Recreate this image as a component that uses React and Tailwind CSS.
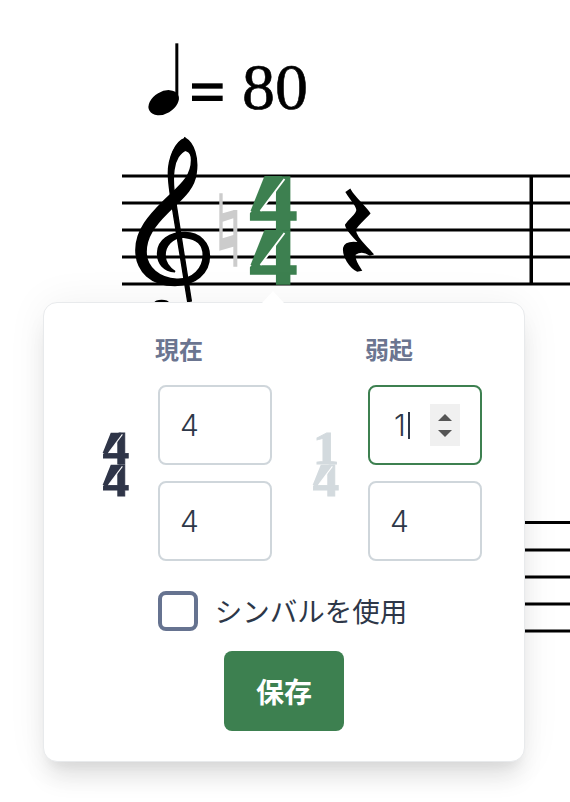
const serif = '"Liberation Serif", serif';
const ui = '"Noto Sans CJK JP", "Noto Sans", sans-serif';

function Score() {
  const staff1 = [176, 203, 230, 257, 284];
  const staff2 = [522.5, 550, 577, 604, 631];
  return (
    <svg className="absolute inset-0" width="570" height="802" viewBox="0 0 570 802">
      {staff1.map((y) => <rect key={y} x="122" y={y - 1.5} width="448" height="3" fill="#000" />)}
      {staff2.map((y) => <rect key={y} x="500" y={y - 1.5} width="70" height="3" fill="#000" />)}
      <rect x="529.5" y="175" width="3.5" height="110" fill="#000" />
      <g transform="translate(120 30) scale(0.3333)">
        {/* quarter note */}
        <rect x="166" y="40" width="9" height="170" fill="#000" />
        <ellipse cx="131" cy="218" rx="49" ry="33" transform="rotate(-30 131 218)" fill="#000" />
        <rect x="216" y="160" width="92" height="16" fill="#000" />
        <rect x="216" y="197" width="92" height="16" fill="#000" />
        {/* clef */}
        <path fill="#000" stroke="#000" strokeWidth="5" d="M195 325 C222 340 235 385 228 430 C222 480 180 510 140 550 C105 585 78 620 78 665 C78 715 120 745 170 748 C220 750 250 715 250 675 C250 640 225 625 195 622 C155 620 135 650 135 675 C135 700 150 715 165 725 C130 722 113 700 113 670 C113 630 150 608 195 608 C240 608 268 640 268 678 C268 730 225 766 165 766 C95 766 48 725 48 660 C48 600 90 555 130 515 C175 470 215 445 215 390 C215 375 210 365 200 362 Z" />
        <path fill="#000" stroke="#000" strokeWidth="4" d="M195 325 C165 335 145 385 145 430 C145 460 150 490 155 520 L203 815 L214 813 L168 520 C160 480 158 450 162 420 C165 390 180 365 200 360 Z" />
        <ellipse cx="125" cy="818" rx="22" ry="9" fill="#000" />
        {/* natural */}
        <path fill="#cccccc" d="M298 490 H308 V550 L340 541 V540 H352 V710 H340 V650 L298 662 Z M308 575 V625 L340 615 V565 Z" fillRule="evenodd" />
        {/* rest */}
        <path fill="#000" stroke="#000" strokeWidth="6" d="M680 487 L690 480 C700 500 730 525 748 550 C735 565 705 590 705 600 C705 625 740 650 757 672 L750 674 C730 660 715 665 705 672 C700 685 712 705 722 720 L712 722 C690 710 670 680 672 655 C675 640 690 635 720 640 C700 620 680 600 678 585 C690 565 712 555 712 540 C712 525 690 505 680 487 Z" />
      </g>
      <text x="242" y="109" fontFamily={serif} fontSize="66" fill="#000" stroke="#000" strokeWidth="0.6">80</text>
      <Four x={273.5} y={230} size={80} sx={1.2} fill="#3d8050" stroke={1.5} k={1} />
      <Four x={273.5} y={284} size={80} sx={1.2} fill="#3d8050" stroke={1.5} k={1} />
    </svg>
  );
}

function Digit({ x, y, size, sx, fill, stroke, value }) {
  return (
    <g transform={`translate(${x} ${y}) scale(${sx} 1)`}>
      <text textAnchor="middle" y="0" fontFamily={serif} fontWeight="700" fontSize={size} fill={fill} stroke={fill} strokeWidth={stroke}>{value}</text>
    </g>
  );
}

function Four({ x, y, size, sx, fill, stroke, k }) {
  const p = (dx, dy) => `${x + dx * k},${y + dy * k}`;
  return (
    <g>
      <Digit x={x} y={y} size={size} sx={sx} fill={fill} stroke={stroke} value="4" />
      <polygon fill={fill} points={[p(-9, -54), p(9, -54), p(-15, -19), p(-23, -19)].join(' ')} />
      <line x1={x + 11 * k} y1={y - 51 * k} x2={x - 13 * k} y2={y - 19 * k} stroke="#fff" strokeWidth={1.8 * k} />
    </g>
  );
}

function TimeSig({ top, bottom, color }) {
  return (
    <svg width="28" height="66" viewBox="0 0 28 66" className="block overflow-visible">
      {top === '4'
        ? <Four x={14} y={32} size={46} sx={1.15} fill={color} stroke={0.8} k={0.58} />
        : <Digit x={14} y={32} size={46} sx={1.15} fill={color} stroke={0.8} value={top} />}
      <Four x={14} y={64} size={46} sx={1.15} fill={color} stroke={0.8} k={0.58} />
    </svg>
  );
}

function NumInput({ value, focused }) {
  return (
    <div className="relative">
      <input
        readOnly
        type="text"
        value={value}
        className={`block h-[80px] w-[114px] rounded-lg border-2 bg-white text-[30px] font-light text-[#2d3748] outline-none ${focused ? 'border-[#3d8050] pl-[24px]' : 'border-[#cfd6db] pl-[20px]'}`}
        style={{ fontFamily: 'Inter, sans-serif' }}
      />
      {focused && (
        <>
          <span className="absolute left-[40px] top-[27px] h-[27px] w-[2px] bg-[#2d3748]" />
          <span className="absolute left-[62px] top-[19px] flex h-[42px] w-[30px] flex-col items-center justify-center gap-[9px] bg-[#f0f0f0]">
            <span className="h-0 w-0 border-x-[7px] border-b-[7px] border-x-transparent border-b-[#555]" />
            <span className="h-0 w-0 border-x-[7px] border-t-[7px] border-x-transparent border-t-[#555]" />
          </span>
        </>
      )}
    </div>
  );
}

function Column({ label, sig, children }) {
  return (
    <div className="flex items-end">
      <div className="mb-[63px] mr-[28px]">{sig}</div>
      <div className="flex flex-col">
        <div className="-ml-[3px] mb-[18px] text-[24px] font-bold leading-[36px] text-[#6b7590]">{label}</div>
        <div className="flex flex-col gap-[16px]">{children}</div>
      </div>
    </div>
  );
}

export default function App() {
  return (
    <div className="relative h-[802px] w-[570px] overflow-hidden bg-white" style={{ fontFamily: ui }}>
      <Score />
      <div className="absolute left-[262px] top-[291px] z-20 h-0 w-0 border-x-[11px] border-b-[12px] border-x-transparent border-b-white" />
      <div className="absolute left-[43px] top-[302px] z-10 flex h-[460px] w-[482px] flex-col rounded-[14px] border border-[#e8eaec] bg-white pt-[28px] shadow-[0_20px_25px_-5px_rgba(0,0,0,0.1),0_10px_10px_-5px_rgba(0,0,0,0.04),0_0_40px_rgba(0,0,0,0.06)]">
        <div className="flex gap-[40px] pl-[58px]">
          <Column label="現在" sig={<TimeSig top="4" bottom="4" color="#2f3548" />}>
            <NumInput value="4" />
            <NumInput value="4" />
          </Column>
          <Column label="弱起" sig={<TimeSig top="1" bottom="4" color="#d3dade" />}>
            <NumInput value="1" focused />
            <NumInput value="4" />
          </Column>
        </div>
        <div className="mt-[30px] flex items-center justify-center gap-[17px] pr-[3px]">
          <span className="h-[40px] w-[40px] rounded-lg border-4 border-[#667390] bg-white" />
          <span className="-mt-[3px] text-[27.5px] leading-[40px] text-[#2d3748]">シンバルを使用</span>
        </div>
        <button className="mx-auto mt-[20px] h-[80px] w-[120px] rounded-lg bg-[#3d8050] text-[28px] font-bold text-white">保存</button>
      </div>
    </div>
  );
}
